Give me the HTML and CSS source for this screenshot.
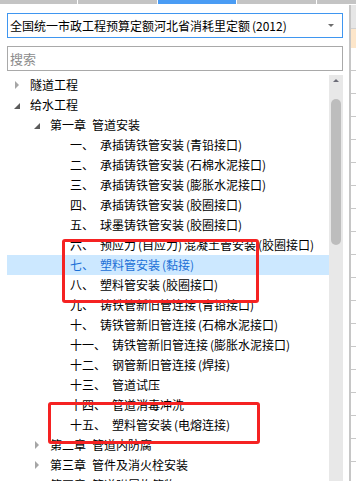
FILE: index.html
```html
<!DOCTYPE html>
<html>
<head>
<meta charset="utf-8">
<link rel="stylesheet" href="styles.css">
</head>
<body>
<div class="tabs">
  <div class="tab"></div>
  <div class="tab"></div>
  <div class="tab active"></div>
  <div class="tab"></div>
  <div class="tab"></div>
</div>
<div class="main">
  <div class="left">
    <div class="select">
      <span class="select-text">全国统一市政工程预算定额河北省消耗里定额<span class="po">(</span>2012<span class="pc">)</span></span>
      <span class="caret"></span>
    </div>
    <div class="search">搜索</div>
    <div class="tree-wrap">
      <div class="tree">
        <div class="row l0"><span class="tw"><span class="tri-c"></span></span>隧道工程</div>
        <div class="row l0"><span class="tw"><span class="tri-e"></span></span>给水工程</div>
        <div class="row l1"><span class="tw"><span class="tri-e"></span></span><span class="num">第一章</span>管道安装</div>
        <div class="row l2"><span class="tw"></span><span class="num">一、</span>承插铸铁管安装<span class="po">(</span>青铅接口<span class="pc">)</span></div>
        <div class="row l2"><span class="tw"></span><span class="num">二、</span>承插铸铁管安装<span class="po">(</span>石棉水泥接口<span class="pc">)</span></div>
        <div class="row l2"><span class="tw"></span><span class="num">三、</span>承插铸铁管安装<span class="po">(</span>膨胀水泥接口<span class="pc">)</span></div>
        <div class="row l2"><span class="tw"></span><span class="num">四、</span>承插铸铁管安装<span class="po">(</span>胶圈接口<span class="pc">)</span></div>
        <div class="row l2"><span class="tw"></span><span class="num">五、</span>球墨铸铁管安装<span class="po">(</span>胶圈接口<span class="pc">)</span></div>
        <div class="row l2"><span class="tw"></span><span class="num">六、</span>预应力<span class="po">(</span>自应力<span class="pc">)</span>混凝土管安装<span class="po">(</span>胶圈接口<span class="pc">)</span></div>
        <div class="row l2 sel"><span class="tw"></span><span class="num">七、</span>塑料管安装<span class="po">(</span>黏接<span class="pc">)</span></div>
        <div class="row l2"><span class="tw"></span><span class="num">八、</span>塑料管安装<span class="po">(</span>胶圈接口<span class="pc">)</span></div>
        <div class="row l2"><span class="tw"></span><span class="num">九、</span>铸铁管新旧管连接<span class="po">(</span>青铅接口<span class="pc">)</span></div>
        <div class="row l2"><span class="tw"></span><span class="num">十、</span>铸铁管新旧管连接<span class="po">(</span>石棉水泥接口<span class="pc">)</span></div>
        <div class="row l2"><span class="tw"></span><span class="num">十一、</span>铸铁管新旧管连接<span class="po">(</span>膨胀水泥接口<span class="pc">)</span></div>
        <div class="row l2"><span class="tw"></span><span class="num">十二、</span>钢管新旧管连接<span class="po">(</span>焊接<span class="pc">)</span></div>
        <div class="row l2"><span class="tw"></span><span class="num">十三、</span>管道试压</div>
        <div class="row l2"><span class="tw"></span><span class="num">十四、</span>管道消毒冲洗</div>
        <div class="row l2"><span class="tw"></span><span class="num">十五、</span>塑料管安装<span class="po">(</span>电熔连接<span class="pc">)</span></div>
        <div class="row l1"><span class="tw"><span class="tri-c"></span></span><span class="num">第二章</span>管道内防腐</div>
        <div class="row l1"><span class="tw"><span class="tri-c"></span></span><span class="num">第三章</span>管件及消火栓安装</div>
        <div class="row l1"><span class="tw"><span class="tri-c"></span></span><span class="num">第四章</span>管道附属构筑物</div>
      </div>
      <div class="scrollbar">
        <span class="up"></span>
        <div class="thumb"></div>
      </div>
    </div>
  </div>
  <div class="right">
    <div class="rhead"></div>
    <div class="rorange"></div>
    <div class="rrow"></div>
    <div class="rrow"></div>
    <div class="rrow"></div>
    <div class="rrow"></div>
    <div class="rrow"></div>
    <div class="rrow"></div>
    <div class="rrow"></div>
    <div class="rrow"></div>
    <div class="rrow"></div>
    <div class="rrow"></div>
    <div class="rrow"></div>
    <div class="rrow"></div>
    <div class="rrow"></div>
    <div class="rrow"></div>
    <div class="rrow"></div>
    <div class="rrow"></div>
    <div class="rrow"></div>
    <div class="rrow"></div>
  </div>
</div>
<div class="mark mark1"></div>
<div class="mark mark2"></div>
</body>
</html>
```

FILE: styles.css
```css
html, body {
  margin: 0;
  padding: 0;
  background: #fff;
  width: 356px;
  height: 481px;
  overflow: hidden;
  font-family: "Noto Sans CJK SC", "Noto Sans", sans-serif;
  font-size: 12px;
  color: #000;
}
.tabs {
  display: flex;
  height: 4px;
  gap: 1px;
  background: #fff;
}
.tab {
  width: 79px;
  flex: none;
  background: #c4c4c4;
}
.tab:first-child { width: 77px; }
.tab:last-child { flex: 1; }
.tab.active { background: #4a9cf4; width: 78px; }
.main {
  display: flex;
  height: 477px;
}
.left {
  margin-left: 7px;
  width: 336px;
  display: flex;
  flex-direction: column;
  padding-top: 9px;
}
.select {
  height: 25px;
  box-sizing: border-box;
  border: 1px solid #3f96f0;
  display: flex;
  align-items: center;
  padding-left: 2px;
  padding-right: 8px;
  font-size: 12px;
}
.select-text { flex: 1; white-space: nowrap; }
.caret {
  width: 0;
  height: 0;
  border-left: 3px solid transparent;
  border-right: 3px solid transparent;
  border-top: 3px solid #6d6d6d;
}
.search {
  margin-top: 8px;
  height: 25px;
  box-sizing: border-box;
  border: 1px solid #a9a9a9;
  display: flex;
  align-items: center;
  padding-left: 2px;
  color: #8c8c8c;
  font-size: 13px;
}
.tree-wrap {
  margin-top: 4px;
  display: flex;
  flex: 1;
  min-height: 0;
}
.tree {
  width: 322px;
  overflow: hidden;
}
.row {
  height: 20px;
  line-height: 20px;
  display: flex;
  align-items: center;
  white-space: nowrap;
}
.row.l0 { padding-left: 6px; }
.row.l1 { padding-left: 26px; }
.row.l2 { padding-left: 46px; }
.row.sel { background: #cce8ff; color: #1a6fd6; }
.po, .pc {
  display: inline-block;
  width: 6px;
}
.po { text-align: right; }
.pc { text-align: left; }
.tw {
  width: 17px;
  flex: none;
  display: flex;
  align-items: center;
  height: 20px;
}
.tri-c {
  width: 0;
  height: 0;
  border-top: 4px solid transparent;
  border-bottom: 4px solid transparent;
  border-left: 4px solid #a6a6a6;
  margin-left: 2px;
}
.tri-e {
  width: 0;
  height: 0;
  border-left: 6px solid transparent;
  border-bottom: 6px solid #5b5b5b;
  margin-left: 1px;
  margin-top: 2px;
}
.num { margin-right: 6px; }
.scrollbar {
  width: 14px;
  background: #e8e8e8;
  display: flex;
  flex-direction: column;
  align-items: center;
}
.up {
  margin-top: 4px;
  width: 0;
  height: 0;
  border-left: 3px solid transparent;
  border-right: 3px solid transparent;
  border-bottom: 3px solid #6d6d78;
}
.thumb {
  margin-top: 17px;
  width: 10px;
  height: 146px;
  background: #bdbdbd;
  border-radius: 5px;
}
.right {
  margin-left: 6px;
  flex: 1;
  border-left: 2px solid #c6c6c6;
  margin-top: 1px;
  display: flex;
  flex-direction: column;
}
.rhead {
  height: 24px;
  background: #e6e6e6;
  border-bottom: 1px solid #d0d0d0;
  box-sizing: border-box;
}
.rorange {
  height: 19px;
  background: #fde6ca;
}
.rrow {
  height: 23px;
  box-sizing: border-box;
  border-bottom: 1px solid #c8c8c8;
}
.mark {
  position: absolute;
  border: 3px solid #f52222;
  border-radius: 3px;
  box-sizing: border-box;
}
.mark1 { left: 62px; top: 239px; width: 197px; height: 64px; }
.mark2 { left: 48px; top: 402px; width: 212px; height: 42px; }
```
